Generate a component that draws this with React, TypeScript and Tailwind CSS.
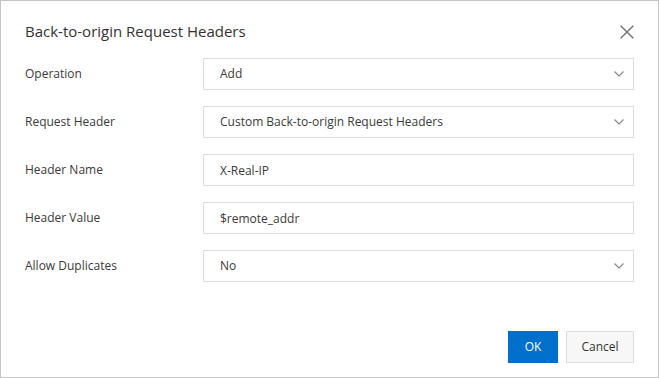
import { useState } from 'react';

const font = { fontFamily: '"Open Sans", "Noto Sans", Arial, sans-serif' };

function Chevron() {
  return (
    <svg width="10" height="6" viewBox="0 0 10 6" fill="none" className="shrink-0">
      <path d="M0.5 0.5 L5 5 L9.5 0.5" stroke="#888888" strokeWidth="1.2" />
    </svg>
  );
}

function SelectBox({ value }: { value: string }) {
  return (
    <div className="h-8 flex-1 flex items-center justify-between border border-[#dddddd] bg-white pl-4 pr-[9px] text-[12px] text-[#3a3a3a] cursor-pointer">
      <span>{value}</span>
      <Chevron />
    </div>
  );
}

function TextBox({ value }: { value: string }) {
  const [v, setV] = useState(value);
  return (
    <input
      value={v}
      onChange={e => setV(e.target.value)}
      className="h-8 flex-1 border border-[#dddddd] bg-white px-4 text-[12px] text-[#3a3a3a] outline-none"
      style={font}
    />
  );
}

const rows: { label: string; kind: 'select' | 'text'; value: string }[] = [
  { label: 'Operation', kind: 'select', value: 'Add' },
  { label: 'Request Header', kind: 'select', value: 'Custom Back-to-origin Request Headers' },
  { label: 'Header Name', kind: 'text', value: 'X-Real-IP' },
  { label: 'Header Value', kind: 'text', value: '$remote_addr' },
  { label: 'Allow Duplicates', kind: 'select', value: 'No' },
];

export default function App() {
  return (
    <div className="w-[659px] h-[378px] bg-white border border-[#c4c4c4] flex flex-col" style={font}>
      {/* Header */}
      <div className="flex items-center justify-between pl-6 pr-6 pt-[18px] h-[43px]">
        <h2 className="text-[15px] text-[#333333] leading-none">Back-to-origin Request Headers</h2>
        <button className="w-[14px] h-[14px] flex items-center justify-center" aria-label="Close">
          <svg width="14" height="14" viewBox="0 0 14 14" fill="none">
            <path d="M0.7 0.7 L13.3 13.3 M13.3 0.7 L0.7 13.3" stroke="#777777" strokeWidth="1.5" />
          </svg>
        </button>
      </div>

      {/* Form */}
      <div className="flex flex-col gap-4 pl-6 pr-6 mt-[14px]">
        {rows.map(r => (
          <div key={r.label} className="flex items-center">
            <label className="w-[178px] text-[12px] text-[#3a3a3a]">{r.label}</label>
            {r.kind === 'select' ? <SelectBox value={r.value} /> : <TextBox value={r.value} />}
          </div>
        ))}
      </div>

      {/* Footer */}
      <div className="flex justify-end gap-2 pr-6 mt-auto mb-[14px]">
        <button className="h-8 w-[50px] bg-[#0070cc] text-white text-[12px]">OK</button>
        <button className="h-8 w-[68px] bg-[#f7f7f7] border border-[#dddddd] text-[#333333] text-[12px]">Cancel</button>
      </div>
    </div>
  );
}
